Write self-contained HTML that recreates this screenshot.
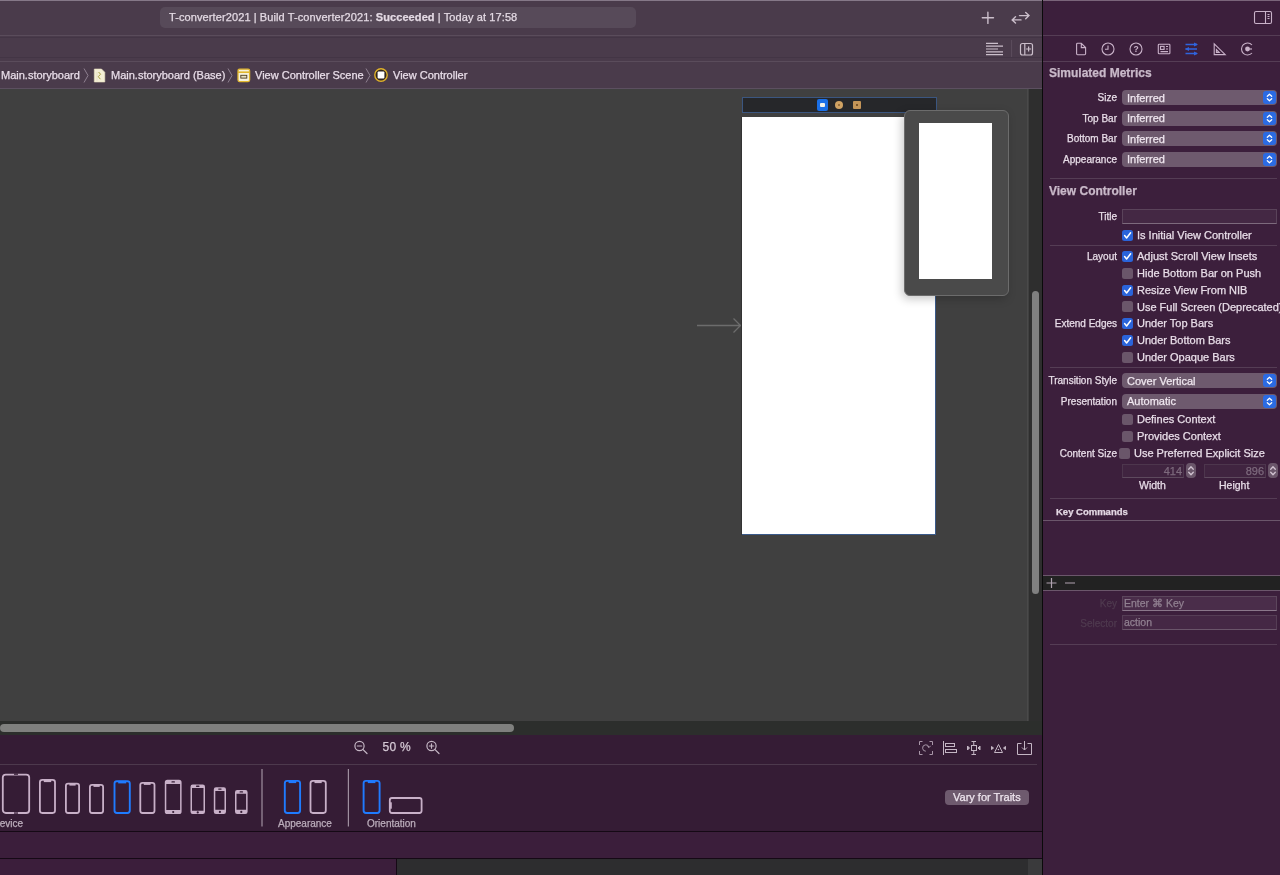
<!DOCTYPE html>
<html><head><meta charset="utf-8">
<style>
*{margin:0;padding:0;box-sizing:border-box}
html,body{width:1280px;height:875px;overflow:hidden;background:#404040;font-family:"Liberation Sans",sans-serif;color:#e8dde8}
.t,.lab,.ct,.pop span{-webkit-text-stroke:0.25px currentColor}
body{will-change:transform}
.a{position:absolute}
.t{position:absolute;white-space:nowrap;font-size:11px;line-height:13px}
.r{text-align:right}
svg{position:absolute;overflow:visible}
.pop{position:absolute;left:1122px;width:155px;height:15px;background:#6e5a6e;border-radius:4px}
.pop span{position:absolute;left:5px;top:1.5px;font-size:11px;line-height:13px;color:#efe6ef;white-space:nowrap}
.pop i{position:absolute;right:1px;top:1px;width:13px;height:13px;background:#2b6be3;border-radius:3px}
.cb{position:absolute;left:1122px;width:11px;height:11px;border-radius:2.5px;background:#6a566a}
.cb.on{background:#2a64da}
.lab{position:absolute;right:163px;white-space:nowrap;font-size:10px;line-height:13px;text-align:right;color:#e8dde8}
.ct{position:absolute;left:1137px;white-space:nowrap;font-size:11px;line-height:13px;color:#e8dde8}
</style></head><body>

<!-- ============ top toolbar ============ -->
<div class="a" style="left:0;top:0;width:1042px;height:36px;background:#4a3b4b"></div>
<div class="a" style="left:0;top:0;width:1042px;height:1px;background:#857888"></div>
<div class="a" style="left:160px;top:7px;width:476px;height:21px;background:#574a59;border-radius:5px"></div>
<div class="t" style="left:169px;top:11px;color:#e3d9e3;letter-spacing:0.1px">T-converter2021 | Build T-converter2021: <b>Succeeded</b> | Today at 17:58</div>
<svg style="left:0;top:0" width="1042" height="36">
  <g stroke="#cbbfcb" stroke-width="1.4" fill="none" stroke-linecap="round">
    <path d="M982.3 17.8H993.5M987.9 12.2V23.4"/>
    <path d="M1019.5 15.6H1029M1025.7 12.4L1029 15.6L1025.7 18.8"/>
    <path d="M1021 19.9H1012.2M1015.5 16.7L1012.2 19.9L1015.5 23.1"/>
  </g>
</svg>

<!-- ============ second bar ============ -->
<div class="a" style="left:0;top:35px;width:1042px;height:1px;background:#5a4c5b"></div>
<div class="a" style="left:0;top:36px;width:1042px;height:25px;background:#4a3b4b"></div><div class="a" style="left:0;top:37px;width:1042px;height:1px;background:#433545"></div><div class="a" style="left:0;top:57px;width:1042px;height:1px;background:#433545"></div>
<div class="a" style="left:0;top:61px;width:1042px;height:1px;background:#5a4c5b"></div>
<svg style="left:0;top:0" width="1042" height="62">
  <g stroke="#cbbfcb" stroke-width="1.2" fill="none">
    <path d="M986 43.3H998M986 46.2H1003M986 49H998M986 51.8H1003M986 54.6H1003"/>
    <rect x="1020.5" y="43.5" width="12" height="11.5" rx="2"/>
    <path d="M1024.8 43.5V55M1028.6 46.5V51.5M1026.1 49H1031.1"/>
  </g>
  <path d="M1011.6 40V57" stroke="#5c4e5d" stroke-width="1"/>
</svg>

<!-- ============ breadcrumb bar ============ -->
<div class="a" style="left:0;top:62px;width:1042px;height:26px;background:#4a3b4b"></div>
<div class="a" style="left:0;top:88px;width:1042px;height:1px;background:#5c5060"></div>
<div class="t" style="left:1px;top:68.5px">Main.storyboard</div>
<div class="t" style="left:111px;top:68.5px">Main.storyboard (Base)</div>
<div class="t" style="left:255px;top:68.5px">View Controller Scene</div>
<div class="t" style="left:393px;top:68.5px">View Controller</div>
<svg style="left:0;top:0" width="1042" height="89">
  <g stroke="#8e8090" stroke-width="1" fill="none">
    <path d="M84 68.5L88 75.5L84 82.5"/>
    <path d="M228 68.5L232 75.5L228 82.5"/>
    <path d="M366 68.5L370 75.5L366 82.5"/>
  </g>
  <!-- storyboard file icon -->
  <path d="M94.3 69H101.5L104.8 72.3V82H94.3Z" fill="#f4efd6" stroke="#e8dfc0" stroke-width="0.6"/>
  <path d="M98.6 72L100.6 74.3L98.2 76.6L100.4 79.2" stroke="#a8a040" stroke-width="1" fill="none"/><path d="M97 72V81" stroke="#ddd6b8" stroke-width="0.6"/>
  <!-- scene icon -->
  <rect x="238" y="69.2" width="11.6" height="12.4" rx="1.5" fill="#f7f2dc" stroke="#e2b72e" stroke-width="1.3"/>
  <path d="M238 72.2H249.6" stroke="#e2b72e" stroke-width="1.6"/>
  <rect x="240.8" y="75.3" width="6" height="2.8" fill="#e8e0c0" stroke="#4a3b20" stroke-width="0.9"/>
  <!-- VC icon -->
  <circle cx="381" cy="75" r="6.2" fill="#2f2520" stroke="#e0b22a" stroke-width="1.4"/>
  <rect x="377.6" y="71.6" width="6.8" height="6.8" rx="1" fill="#ffffff"/>
</svg>

<!-- ============ canvas ============ -->
<div class="a" style="left:0;top:89px;width:1029px;height:632px;background:#404040"></div>
<div class="a" style="left:1029px;top:89px;width:13px;height:632px;background:#2e2e2e"></div><div class="a" style="left:1027px;top:89px;width:1px;height:632px;background:#4a4a4a"></div>
<div class="a" style="left:1032px;top:291px;width:7.2px;height:303px;background:#808080;border-radius:3.6px"></div>
<div class="a" style="left:0;top:721px;width:1042px;height:14px;background:#2c2e2c"></div>
<div class="a" style="left:0;top:724px;width:514px;height:8px;background:#7f807e;border-radius:4px"></div>

<!-- scene -->
<div class="a" style="left:742px;top:97px;width:195px;height:16px;background:#26272a;border:1px solid #3b5680"></div>
<div class="a" style="left:816.5px;top:99px;width:11.5px;height:11.5px;background:#1a6fe6;border-radius:2px"></div>
<div class="a" style="left:819.5px;top:103px;width:5px;height:4px;background:#f2f2ea;border-radius:1px"></div>
<div class="a" style="left:835px;top:100.7px;width:8.2px;height:8.2px;background:#cfa263;border-radius:50%"></div><div class="a" style="left:838px;top:103.5px;width:2.4px;height:2.6px;background:#8a6030;border-radius:50%"></div>
<div class="a" style="left:852.7px;top:100.7px;width:8px;height:8.3px;background:#c49558;border-radius:1px"></div><div class="a" style="left:855.5px;top:103.5px;width:2.5px;height:2.6px;background:#7a5428"></div>
<div class="a" style="left:742px;top:117px;width:194px;height:418px;background:#ffffff;border-right:1px solid #3a5a8a;border-bottom:1px solid #3a5a8a"></div>
<svg style="left:0;top:0" width="1029" height="700">
  <path d="M697 325.5H740M733.5 318.5L740.5 325.5L733.5 332.5" stroke="#6c6c6c" stroke-width="1.3" fill="none"/><path d="M741.5 117V535" stroke="#333333" stroke-width="1"/>
</svg>
<!-- popover -->
<div class="a" style="left:904px;top:110px;width:105px;height:186px;background:#4a4a4a;border:1px solid #6c6c6c;border-radius:6px;box-shadow:-2px 3px 10px rgba(0,0,0,0.22)"></div>
<div class="a" style="left:919px;top:123px;width:73px;height:156px;background:#ffffff"></div>

<!-- ============ bottom purple area ============ -->
<div class="a" style="left:0;top:735px;width:1042px;height:96px;background:#351c35"></div>
<div class="a" style="left:0;top:764px;width:1037px;height:1px;background:#4d394d"></div>
<div class="t" style="left:382.5px;top:740.5px;font-size:12px;letter-spacing:0.3px;color:#d4c8d4">50 %</div>
<svg style="left:0;top:730px" width="1042" height="100">
  <g stroke="#c4b6c4" stroke-width="1.2" fill="none" stroke-linecap="round">
    <circle cx="359.5" cy="16" r="4.6"/><path d="M362.8 19.3L367 23.5M357.3 16H361.7"/>
    <circle cx="431.5" cy="16" r="4.6"/><path d="M434.8 19.3L439 23.5M429.3 16H433.7M431.5 13.8V18.2"/>
  </g>
  <g stroke="#a896a8" stroke-width="1" fill="none">
    <path d="M919.5 15V11.5H922.5M929.5 11.5H932.5V15M932.5 21V24.5H929.5M922.5 24.5H919.5V21"/>
    <path d="M928.9 17.2A3.2 3.2 0 1 0 925.8 21.2" />
    <path d="M927.3 16L929 17.6L930.6 15.8"/>
  </g>
  <g stroke="#c4b6c4" stroke-width="1" fill="none">
    <path d="M943.5 11V25"/><rect x="945.5" y="13.5" width="9" height="3"/><rect x="945.5" y="19.5" width="11" height="3"/>
    <rect x="971.5" y="15.5" width="5" height="5"/><path d="M973.75 12V15.5M971.5 11.5H976M973.75 20.5V24.5M971.5 24.5H976"/>
    <path d="M967.5 16L969.5 18L967.5 20Z M980 16L978 18L980 20Z" fill="#c4b6c4"/>
    <path d="M994.5 22.5L998.5 14.5L1002.5 22.5Z"/><circle cx="998.4" cy="19.5" r="0.8" fill="#c4b6c4" stroke="none"/>
    <path d="M991.5 16.5L993.5 18L991.5 19.5Z M1005.5 16.5L1003.5 18L1005.5 19.5Z" fill="#c4b6c4"/>
    <path d="M1021.5 13.5H1017.5V24.5H1031.5V13.5H1027.5"/><path d="M1024.5 11V20M1022 17.5L1024.5 20L1027 17.5"/>
  </g>
</svg>

<!-- device bar -->
<svg style="left:0;top:0" width="1042" height="832">
  <g fill="none" stroke="#c8b0c8" stroke-width="1.8">
    <rect x="2.8" y="774.6" width="26.4" height="38.4" rx="3"/>
    <rect x="39.9" y="779.9" width="15.1" height="33.1" rx="2.4"/>
    <rect x="65.9" y="783.6" width="13.2" height="29.4" rx="2.2"/>
    <rect x="89.9" y="784.9" width="13.2" height="28.1" rx="2.2"/>
    <rect x="140.3" y="782.9" width="14.2" height="30.1" rx="2.2"/>
    <rect x="310.5" y="780.9" width="15.3" height="32.1" rx="2.4"/>
    <rect x="389.8" y="798" width="31.8" height="15" rx="2.2"/>
  </g>
  <path d="M262 769V826.5M348.4 769V826.5" stroke="#9f8f9f" stroke-width="1.2"/>
  <g fill="#c8b0c8">
    <rect x="43.8" y="779.5" width="7.4" height="2.6"/>
    <rect x="69.4" y="783.2" width="6.2" height="2.4"/>
    <rect x="93.5" y="784.5" width="6.2" height="2.4"/>
    <rect x="143.8" y="782.5" width="6.8" height="2.4"/>
    <rect x="314.5" y="780.5" width="7.2" height="2.6"/>
    <rect x="389.4" y="802.3" width="2.4" height="6.4"/>
  </g>
  <g fill="#351c35"><rect x="14" y="773.5" width="4" height="1.3"/><rect x="14" y="812.4" width="4" height="1.3"/></g>
<path fill-rule="evenodd" d="M167.4 779.8H179.0Q181.6 779.8 181.6 782.4V811.5Q181.6 814.1 179.0 814.1H167.4Q164.8 814.1 164.8 811.5V782.4Q164.8 779.8 167.4 779.8Z M166.3 784.0H180.1V809.9H166.3Z" fill="#c8b0c8"/><rect x="171.39999999999998" y="781.1999999999999" width="3.6" height="1.4" rx="0.7" fill="#351c35"/><circle cx="173.2" cy="812.0" r="1.1" fill="#351c35"/><path fill-rule="evenodd" d="M192.7 784.5H202.8Q205 784.5 205 786.7V811.8Q205 814 202.8 814H192.7Q190.5 814 190.5 811.8V786.7Q190.5 784.5 192.7 784.5Z M192.0 788.0H203.5V810.8H192.0Z" fill="#c8b0c8"/><rect x="195.95" y="785.55" width="3.6" height="1.4" rx="0.7" fill="#351c35"/><circle cx="197.75" cy="812.4" r="1.1" fill="#351c35"/><path fill-rule="evenodd" d="M216.0 787.2H223.8Q226 787.2 226 789.4000000000001V811.8Q226 814 223.8 814H216.0Q213.8 814 213.8 811.8V789.4000000000001Q213.8 787.2 216.0 787.2Z M215.3 791.0H224.5V809.8H215.3Z" fill="#c8b0c8"/><rect x="218.1" y="788.4" width="3.6" height="1.4" rx="0.7" fill="#351c35"/><circle cx="219.9" cy="811.9" r="1.1" fill="#351c35"/><path fill-rule="evenodd" d="M237.2 790H245.4Q247.6 790 247.6 792.2V811.8Q247.6 814 245.4 814H237.2Q235 814 235 811.8V792.2Q235 790 237.2 790Z M236.5 793.8H246.1V809.8H236.5Z" fill="#c8b0c8"/><rect x="239.5" y="791.1999999999999" width="3.6" height="1.4" rx="0.7" fill="#351c35"/><circle cx="241.3" cy="811.9" r="1.1" fill="#351c35"/>
  <g fill="none" stroke="#1f7bff" stroke-width="1.9">
    <rect x="114.5" y="781.2" width="15.3" height="31.8" rx="2.4"/>
    <rect x="284.8" y="780.9" width="15.3" height="32.1" rx="2.4"/>
    <rect x="363.6" y="780.9" width="16" height="32.1" rx="2.4"/>
  </g>
  <g fill="#1f7bff">
    <rect x="118.2" y="780.8" width="8" height="2.6"/>
    <rect x="288.6" y="780.5" width="7.6" height="2.6"/>
    <rect x="367.8" y="780.5" width="7.6" height="2.6"/>
  </g>
</svg>
<div class="t" style="left:-7.5px;top:817px;font-size:10px;color:#bcaebc">Device</div>
<div class="t" style="left:278px;top:817px;font-size:10px;color:#bcaebc">Appearance</div>
<div class="t" style="left:367px;top:817px;font-size:10px;color:#bcaebc">Orientation</div>
<div class="a" style="left:945px;top:790px;width:84px;height:15px;background:#6e5a6e;border-radius:4px"></div>
<div class="t" style="left:953px;top:791px;color:#efe6ef">Vary for Traits</div>

<div class="a" style="left:0;top:831px;width:1042px;height:1px;background:#150915"></div>
<div class="a" style="left:0;top:832px;width:1042px;height:26px;background:#3b1e3b"></div>
<div class="a" style="left:0;top:858px;width:1042px;height:1px;background:#150915"></div>
<div class="a" style="left:0;top:859px;width:397px;height:16px;background:#3b1e3b"></div>
<div class="a" style="left:396px;top:859px;width:1px;height:16px;background:#150915"></div>
<div class="a" style="left:397px;top:859px;width:631px;height:16px;background:#2d2d2f"></div>
<div class="a" style="left:1028px;top:859px;width:14px;height:16px;background:#3a3a3c"></div>

<!-- ============ inspector ============ -->
<div class="a" style="left:1042px;top:0;width:1px;height:875px;background:#0a0a0a"></div>
<div class="a" style="left:1043px;top:0;width:237px;height:875px;background:#3c1f3c"></div>
<div class="a" style="left:1043px;top:0;width:237px;height:1px;background:#7a647a"></div>
<div class="a" style="left:1043px;top:35px;width:237px;height:1px;background:#553d55"></div>
<div class="a" style="left:1043px;top:61px;width:237px;height:1px;background:#553d55"></div>
<svg style="left:1043px;top:0" width="237" height="62">
  <g stroke="#c9b2c9" stroke-width="1.1" fill="none">
    <rect x="211.5" y="11.5" width="17" height="12" rx="1.5"/><path d="M222.5 11.5V23.5M224.5 14.5H226.5M224.5 16.5H226.5M224.5 18.5H226.5"/>
    <path d="M34.5 43.3H38.3L42.6 47.6V53.8Q42.6 54.7 41.7 54.7H34.5Q33.6 54.7 33.6 53.8V44.2Q33.6 43.3 34.5 43.3Z M38.3 43.3V47.6H42.6"/>
    <circle cx="65" cy="49" r="6"/><path d="M65 45.5V49.3H62"/>
    <circle cx="93" cy="49" r="6"/>
    <rect x="115.3" y="44.2" width="11.6" height="9.6" rx="0.8"/><rect x="117.5" y="46.4" width="3.6" height="3"/><path d="M123 46.5H125M123 49H125M117.5 51.6H125"/>
    <path d="M171.2 43.8V54.6H182.2Z M173.4 49.6V52.4H176.2Z"/>
    <path d="M209 45A6 6 0 1 0 209 53"/>
  </g>
  <text x="93" y="52.3" font-size="8.5" font-weight="700" text-anchor="middle" fill="#c9b2c9" font-family="Liberation Sans">?</text>
  <circle cx="204.5" cy="49" r="2.4" fill="#c9b2c9"/><path d="M204.5 49H209" stroke="#c9b2c9" stroke-width="1.2"/>
  <g stroke="#2f64de" stroke-width="1.4" fill="none">
    <path d="M142.5 44.5H154M142.5 49H154M142.5 53.5H154"/>
  </g>
  <g fill="#2f64de"><path d="M151 42.5L155 44.5L151 46.5Z M146 47L142 49L146 51Z M151 51.5L155 53.5L151 55.5Z"/></g>
</svg>

<div class="t" style="left:1049px;top:67px;font-size:12px;font-weight:700;color:#c9b9c9">Simulated Metrics</div>
<div class="lab" style="top:91px">Size</div>
<div class="pop" style="top:90px"><span>Inferred</span><i><svg width="13" height="13" style="left:0;top:0"><path d="M4.3 5.3L6.5 3.2L8.7 5.3M4.3 7.7L6.5 9.8L8.7 7.7" stroke="#ffffff" stroke-width="1.2" fill="none" stroke-linecap="round" stroke-linejoin="round"/></svg></i></div>
<div class="lab" style="top:111.5px">Top Bar</div>
<div class="pop" style="top:110.5px"><span>Inferred</span><i><svg width="13" height="13" style="left:0;top:0"><path d="M4.3 5.3L6.5 3.2L8.7 5.3M4.3 7.7L6.5 9.8L8.7 7.7" stroke="#ffffff" stroke-width="1.2" fill="none" stroke-linecap="round" stroke-linejoin="round"/></svg></i></div>
<div class="lab" style="top:132px">Bottom Bar</div>
<div class="pop" style="top:131px"><span>Inferred</span><i><svg width="13" height="13" style="left:0;top:0"><path d="M4.3 5.3L6.5 3.2L8.7 5.3M4.3 7.7L6.5 9.8L8.7 7.7" stroke="#ffffff" stroke-width="1.2" fill="none" stroke-linecap="round" stroke-linejoin="round"/></svg></i></div>
<div class="lab" style="top:152.5px">Appearance</div>
<div class="pop" style="top:151.5px"><span>Inferred</span><i><svg width="13" height="13" style="left:0;top:0"><path d="M4.3 5.3L6.5 3.2L8.7 5.3M4.3 7.7L6.5 9.8L8.7 7.7" stroke="#ffffff" stroke-width="1.2" fill="none" stroke-linecap="round" stroke-linejoin="round"/></svg></i></div>
<div class="a" style="left:1050px;top:178px;width:227px;height:1px;background:#553d55"></div>

<div class="t" style="left:1049px;top:185px;font-size:12px;font-weight:700;color:#c9b9c9">View Controller</div>
<div class="lab" style="top:210px">Title</div>
<div class="a" style="left:1122px;top:209px;width:155px;height:15px;background:#442844;border:1px solid #5a435a;border-bottom-color:#7d6a7d"></div>
<div class="cb on" style="top:230px"><svg width="11" height="11" style="left:0;top:0"><path d="M2.6 5.6L4.6 8L8.6 2.8" stroke="#ffffff" stroke-width="1.5" fill="none" stroke-linecap="round" stroke-linejoin="round"/></svg></div><div class="ct" style="top:229px">Is Initial View Controller</div>
<div class="a" style="left:1050px;top:245px;width:227px;height:1px;background:#553d55"></div>

<div class="lab" style="top:250px">Layout</div>
<div class="cb on" style="top:251px"><svg width="11" height="11" style="left:0;top:0"><path d="M2.6 5.6L4.6 8L8.6 2.8" stroke="#ffffff" stroke-width="1.5" fill="none" stroke-linecap="round" stroke-linejoin="round"/></svg></div><div class="ct" style="top:250px">Adjust Scroll View Insets</div>
<div class="cb" style="top:268px"></div><div class="ct" style="top:267px">Hide Bottom Bar on Push</div>
<div class="cb on" style="top:284.5px"><svg width="11" height="11" style="left:0;top:0"><path d="M2.6 5.6L4.6 8L8.6 2.8" stroke="#ffffff" stroke-width="1.5" fill="none" stroke-linecap="round" stroke-linejoin="round"/></svg></div><div class="ct" style="top:283.5px">Resize View From NIB</div>
<div class="cb" style="top:301px"></div><div class="ct" style="top:300.5px">Use Full Screen (Deprecated)</div>
<div class="lab" style="top:317px">Extend Edges</div>
<div class="cb on" style="top:318px"><svg width="11" height="11" style="left:0;top:0"><path d="M2.6 5.6L4.6 8L8.6 2.8" stroke="#ffffff" stroke-width="1.5" fill="none" stroke-linecap="round" stroke-linejoin="round"/></svg></div><div class="ct" style="top:317px">Under Top Bars</div>
<div class="cb on" style="top:335px"><svg width="11" height="11" style="left:0;top:0"><path d="M2.6 5.6L4.6 8L8.6 2.8" stroke="#ffffff" stroke-width="1.5" fill="none" stroke-linecap="round" stroke-linejoin="round"/></svg></div><div class="ct" style="top:334px">Under Bottom Bars</div>
<div class="cb" style="top:351.5px"></div><div class="ct" style="top:350.5px">Under Opaque Bars</div>
<div class="a" style="left:1050px;top:367px;width:227px;height:1px;background:#553d55"></div>

<div class="lab" style="top:374px">Transition Style</div>
<div class="pop" style="top:373px"><span>Cover Vertical</span><i><svg width="13" height="13" style="left:0;top:0"><path d="M4.3 5.3L6.5 3.2L8.7 5.3M4.3 7.7L6.5 9.8L8.7 7.7" stroke="#ffffff" stroke-width="1.2" fill="none" stroke-linecap="round" stroke-linejoin="round"/></svg></i></div>
<div class="lab" style="top:394.5px">Presentation</div>
<div class="pop" style="top:393.5px"><span>Automatic</span><i><svg width="13" height="13" style="left:0;top:0"><path d="M4.3 5.3L6.5 3.2L8.7 5.3M4.3 7.7L6.5 9.8L8.7 7.7" stroke="#ffffff" stroke-width="1.2" fill="none" stroke-linecap="round" stroke-linejoin="round"/></svg></i></div>
<div class="cb" style="top:414px"></div><div class="ct" style="top:413px">Defines Context</div>
<div class="cb" style="top:430.5px"></div><div class="ct" style="top:429.5px">Provides Context</div>
<div class="lab" style="top:447px">Content Size</div>
<div class="cb" style="top:447.5px;left:1119px"></div><div class="ct" style="top:446.5px;left:1134px">Use Preferred Explicit Size</div>
<div class="a" style="left:1122px;top:464px;width:62px;height:14px;background:#402440;border:1px solid #4d364d;border-bottom-color:#5e4a5e"></div>
<div class="t" style="left:1122px;top:464.5px;width:60px;text-align:right;color:#7d6a7d">414</div>
<div class="a" style="left:1186px;top:463px;width:10px;height:15px;background:#6a566a;border-radius:4px"></div>
<div class="a" style="left:1204px;top:464px;width:62px;height:14px;background:#402440;border:1px solid #4d364d;border-bottom-color:#5e4a5e"></div>
<div class="t" style="left:1204px;top:464.5px;width:60px;text-align:right;color:#7d6a7d">896</div>
<div class="a" style="left:1268px;top:463px;width:10px;height:15px;background:#6a566a;border-radius:4px"></div>
<svg style="left:0;top:0" width="1280" height="500">
  <g stroke="#d0c2d0" stroke-width="1.3" fill="none" stroke-linecap="round" stroke-linejoin="round">
    <path d="M1188.7 469.3L1191 466.8L1193.3 469.3M1188.7 472.2L1191 474.7L1193.3 472.2"/>
    <path d="M1270.7 469.3L1273 466.8L1275.3 469.3M1270.7 472.2L1273 474.7L1275.3 472.2"/>
  </g>
</svg>
<div class="t" style="left:1139px;top:479px;font-size:10.5px">Width</div>
<div class="t" style="left:1219px;top:479px;font-size:10.5px">Height</div>
<div class="a" style="left:1050px;top:498px;width:227px;height:1px;background:#553d55"></div>

<div class="t" style="left:1056px;top:504.5px;font-size:9.5px;font-weight:700;color:#e4d8e4">Key Commands</div>
<div class="a" style="left:1043px;top:520px;width:237px;height:1px;background:#6b566b"></div>
<div class="a" style="left:1043px;top:575px;width:237px;height:1px;background:#6b566b"></div>
<div class="a" style="left:1043px;top:576px;width:237px;height:15px;background:#222222"></div>
<div class="a" style="left:1043px;top:590px;width:237px;height:1px;background:#6b566b"></div>
<svg style="left:1043px;top:570px" width="40" height="25">
  <g stroke="#b0a2b0" stroke-width="1.2"><path d="M3.5 13H13.5M8.5 8V18M22 13H32" /></g>
</svg>
<div class="lab" style="top:597px;font-size:10px;color:#4f3a4f">Key</div>
<div class="a" style="left:1122px;top:596px;width:155px;height:15px;background:#4a2d4a;border:1px solid #5c465c;border-bottom-color:#8a778a"></div>
<div class="t" style="left:1124px;top:597px;font-size:10.5px;color:#918191">Enter ⌘ Key</div>
<div class="lab" style="top:616.5px;font-size:10px;color:#4f3a4f">Selector</div>
<div class="a" style="left:1122px;top:615px;width:155px;height:15px;background:#452845;border:1px solid #553d55;border-bottom-color:#6a556a"></div>
<div class="t" style="left:1124px;top:616px;font-size:10.5px;color:#918191">action</div>
<div class="a" style="left:1050px;top:644px;width:227px;height:1px;background:#553d55"></div>

</body></html>
